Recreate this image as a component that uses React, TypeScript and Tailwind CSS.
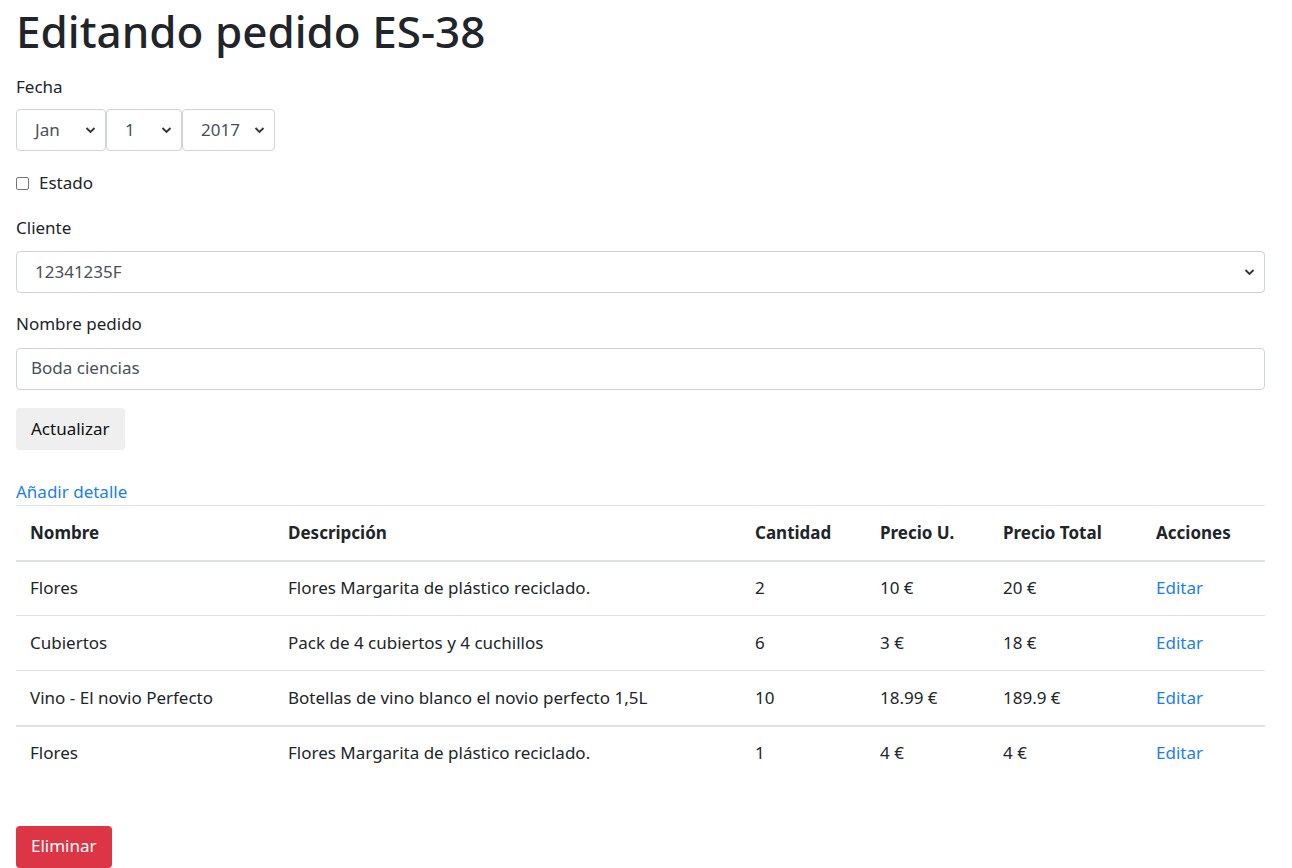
import React from "react";

const Chevron = () => (
  <svg width="11" height="8" viewBox="0 0 11 8" className="pointer-events-none">
    <path d="M1.5 2 L5.5 6 L9.5 2" fill="none" stroke="#333" strokeWidth="1.8" />
  </svg>
);

function FakeSelect({ value, className }: { value: string; className: string }) {
  return (
    <div
      className={`flex h-[42px] items-center justify-between rounded-[4px] border border-[#ced4da] bg-white pl-[18px] pr-[9px] text-[#495057] ${className}`}
    >
      <span>{value}</span>
      <Chevron />
    </div>
  );
}

const rows = [
  { n: "Flores", d: "Flores Margarita de plástico reciclado.", c: "2", p: "10 €", t: "20 €" },
  { n: "Cubiertos", d: "Pack de 4 cubiertos y 4 cuchillos", c: "6", p: "3 €", t: "18 €" },
  { n: "Vino - El novio Perfecto", d: "Botellas de vino blanco el novio perfecto 1,5L", c: "10", p: "18.99 €", t: "189.9 €" },
];
const last = { n: "Flores", d: "Flores Margarita de plástico reciclado.", c: "1", p: "4 €", t: "4 €" };

function Row({ r, top }: { r: typeof last; top: string }) {
  return (
    <tr>
      <td className={`${top} px-[14px] h-[55px] align-middle`}>{r.n}</td>
      <td className={`${top} px-[14px] align-middle`}>{r.d}</td>
      <td className={`${top} px-[14px] align-middle`}>{r.c}</td>
      <td className={`${top} px-[14px] align-middle`}>{r.p}</td>
      <td className={`${top} px-[14px] align-middle`}>{r.t}</td>
      <td className={`${top} px-[14px] align-middle text-[#1a7ef0]`}>Editar</td>
    </tr>
  );
}

export default function App() {
  return (
    <div
      className="min-h-[868px] bg-white pl-4 text-[17px] leading-[26.4px] text-[#212529]"
      style={{ fontFamily: '"Noto Sans", "Open Sans", sans-serif' }}
    >
      <div className="w-[1249px]">
        <h1 className="pt-[5px] text-[44px] font-medium leading-[53px]">Editando pedido ES-38</h1>
        <div className="mt-[16px]">Fecha</div>
        <div className="mt-[9px] flex">
          <FakeSelect value="Jan" className="w-[90px]" />
          <FakeSelect value="1" className="w-[76px]" />
          <FakeSelect value="2017" className="w-[93px]" />
        </div>
        <label className="mt-[19px] flex items-center">
          <span className="mr-[10px] inline-block h-[13px] w-[13px] rounded-[2px] border border-[#767676] bg-white" />
          <span>Estado</span>
        </label>
        <div className="mt-[18px]">Cliente</div>
        <FakeSelect value="12341235F" className="mt-[10px] w-full" />
        <div className="mt-[18px]">Nombre pedido</div>
        <div className="mt-[10px] flex h-[42px] items-center rounded-[4px] border border-[#ced4da] bg-white px-[14px] text-[#495057]">
          Boda ciencias
        </div>
        <button className="mt-[18px] flex h-[42px] items-center rounded-[4px] bg-[#efefef] px-[15px] pt-[1px] text-[#111]">
          Actualizar
        </button>
        <div className="mt-[29px] text-[#1a7ef0]">Añadir detalle</div>
        <table className="w-full table-fixed border-collapse text-left">
          <colgroup>
            <col className="w-[258px]" />
            <col className="w-[467px]" />
            <col className="w-[125px]" />
            <col className="w-[123px]" />
            <col className="w-[153px]" />
            <col className="w-[123px]" />
          </colgroup>
          <thead>
            <tr className="font-bold">
              {["Nombre", "Descripción", "Cantidad", "Precio U.", "Precio Total", "Acciones"].map((h) => (
                <th key={h} className="h-[55px] border-t border-b-2 border-[#dee2e6] px-[14px] align-middle font-bold">
                  {h}
                </th>
              ))}
            </tr>
          </thead>
          <tbody>
            {rows.map((r, i) => (
              <Row key={i} r={r} top={i === 0 ? "" : "border-t border-[#dee2e6]"} />
            ))}
          </tbody>
          <tbody>
            <Row r={last} top="border-t-2 border-[#dee2e6]" />
          </tbody>
        </table>
        <button className="mt-[45px] flex h-[42px] items-center rounded-[4px] bg-[#dc3545] px-[15px] text-white">
          Eliminar
        </button>
      </div>
    </div>
  );
}
